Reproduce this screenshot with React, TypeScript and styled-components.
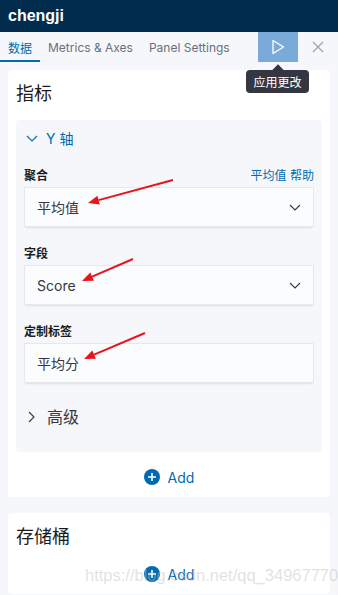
import React from 'react'
import styled, { createGlobalStyle } from 'styled-components'

const GlobalStyle = createGlobalStyle`
  html, body {
    margin: 0;
    padding: 0;
    background: #f5f7fa;
  }
  body {
    font-family: 'Inter', 'Noto Sans CJK SC', sans-serif;
    color: #343741;
  }
  * { box-sizing: border-box; }
`

const Page = styled.div`
  position: relative;
  width: 338px;
  height: 595px;
  overflow: hidden;
  background: #f5f7fa;
`

const Header = styled.header`
  height: 32px;
  padding: 0 8px;
  display: flex;
  align-items: center;
  background: #012c4d;
  color: #fff;
  font-size: 16px;
  font-weight: 700;
  font-family: 'Liberation Sans', 'Inter', sans-serif;
`

const TabBar = styled.nav`
  height: 30px;
  display: flex;
  align-items: stretch;
`

const Tab = styled.div<{ $active?: boolean }>`
  padding: 2px 8px 0 8px;
  display: flex;
  align-items: center;
  font-size: 12px;
  color: ${p => (p.$active ? '#006bb4' : '#69707d')};
  border-bottom: 2px solid ${p => (p.$active ? '#006bb4' : 'transparent')};
`

const Spacer = styled.div`
  flex: 1;
`

const PlayButton = styled.div`
  width: 40px;
  display: flex;
  align-items: center;
  justify-content: center;
  background: #79aad9;
`

const CloseButton = styled.div`
  width: 40px;
  display: flex;
  align-items: center;
  justify-content: center;
`

const Content = styled.div`
  padding: 8px 0 0 8px;
  width: 330px;
  display: flex;
  flex-direction: column;
  gap: 16px;
`

const Card = styled.section`
  background: #fff;
  border-radius: 4px;
  padding: 12px 8px 10px 8px;
`

const Title = styled.h2`
  margin: 0 0 14px 0;
  font-size: 18px;
  font-weight: 400;
  line-height: 24px;
  color: #1a1c21;
`

const Panel = styled.div`
  background: #f5f7fa;
  border-radius: 4px;
  padding: 8px 8px 23px 8px;
`

const PanelHead = styled.div`
  height: 20px;
  display: flex;
  align-items: center;
  gap: 8px;
  padding-left: 2px;
  color: #006bb4;
  font-size: 14px;
`

const Row = styled.div<{ $first?: boolean }>`
  margin-top: ${p => (p.$first ? '18px' : '17px')};
`

const LabelLine = styled.div`
  display: flex;
  justify-content: space-between;
  align-items: center;
  height: 16px;
  margin-bottom: 5px;
`

const Label = styled.label`
  font-size: 12px;
  font-weight: 700;
  color: #1a1c21;
`

const HelpLink = styled.span`
  font-size: 12px;
  color: #006bb4;
`

const Field = styled.div`
  height: 40px;
  display: flex;
  align-items: center;
  justify-content: space-between;
  padding: 0 12px;
  background: #fbfcfd;
  border: 1px solid rgba(0, 0, 0, 0.08);
  box-shadow: 0 1px 1px -1px rgba(152, 162, 179, 0.25), 0 3px 2px -2px rgba(152, 162, 179, 0.25);
  font-size: 14px;
  color: #343741;
`

const Advanced = styled.div`
  margin-top: 22px;
  display: flex;
  align-items: center;
  gap: 10px;
  padding-left: 1px;
  font-size: 16px;
  line-height: 24px;
  color: #343741;
`

const AddRow = styled.div`
  display: flex;
  align-items: center;
  justify-content: center;
  gap: 8px;
  height: 20px;
  margin-top: 15px;
  color: #006bb4;
  font-size: 14px;
`

const Tooltip = styled.div`
  position: absolute;
  left: 246px;
  top: 70px;
  width: 63px;
  height: 23px;
  border-radius: 4px;
  background: #343741;
  color: #fff;
  font-size: 12px;
  display: flex;
  align-items: center;
  justify-content: center;
  &::before {
    content: '';
    position: absolute;
    top: -4px;
    left: 28px;
    width: 8px;
    height: 8px;
    background: #343741;
    transform: rotate(45deg);
  }
`

const Overlay = styled.svg`
  position: absolute;
  left: 0;
  top: 0;
  pointer-events: none;
`

const Watermark = styled.div`
  position: absolute;
  left: 85px;
  top: 566px;
  font-family: 'Liberation Sans', sans-serif;
  font-size: 16.5px;
  color: rgba(190, 190, 190, 0.45);
  pointer-events: none;
  white-space: nowrap;
`

const Chevron = ({ dir, color = '#343741' }: { dir: 'down' | 'right'; color?: string }) => (
  <svg width="12" height="12" viewBox="0 0 12 12">
    {dir === 'down' ? (
      <path d="M1 4 L6 9 L11 4" fill="none" stroke={color} strokeWidth="1.1" />
    ) : (
      <path d="M4 1 L9 6 L4 11" fill="none" stroke={color} strokeWidth="1.1" />
    )}
  </svg>
)

const PlusCircle = () => (
  <svg width="16" height="16" viewBox="0 0 16 16">
    <circle cx="8" cy="8" r="8" fill="#006bb4" />
    <path d="M8 4 V12 M4 8 H12" stroke="#fff" strokeWidth="1.6" />
  </svg>
)

const Arrow = ({ x1, y1, x2, y2 }: { x1: number; y1: number; x2: number; y2: number }) => {
  const a = Math.atan2(y2 - y1, x2 - x1)
  const len = 11
  const w = 4.5
  const bx = x2 - len * Math.cos(a)
  const by = y2 - len * Math.sin(a)
  const p1 = `${bx + w * Math.sin(a)},${by - w * Math.cos(a)}`
  const p2 = `${bx - w * Math.sin(a)},${by + w * Math.cos(a)}`
  return (
    <g>
      <line x1={x1} y1={y1} x2={bx} y2={by} stroke="#e8141b" strokeWidth="2" />
      <polygon points={`${x2},${y2} ${p1} ${p2}`} fill="#e8141b" />
    </g>
  )
}

export default function App() {
  return (
    <Page>
      <GlobalStyle />
      <Header>chengji</Header>
      <TabBar>
        <Tab $active>数据</Tab>
        <Tab>Metrics &amp; Axes</Tab>
        <Tab>Panel Settings</Tab>
        <Spacer />
        <PlayButton>
          <svg width="14" height="16" viewBox="0 0 14 16">
            <path d="M2 1.5 L12.5 8 L2 14.5 Z" fill="none" stroke="#fff" strokeWidth="1.3" strokeLinejoin="round" />
          </svg>
        </PlayButton>
        <CloseButton>
          <svg width="12" height="12" viewBox="0 0 12 12">
            <path d="M1 1 L11 11 M11 1 L1 11" stroke="#98a2b3" strokeWidth="1.2" />
          </svg>
        </CloseButton>
      </TabBar>
      <Content>
        <Card>
          <Title>指标</Title>
          <Panel>
            <PanelHead>
              <Chevron dir="down" color="#006bb4" />
              <span>Y 轴</span>
            </PanelHead>
            <Row $first>
              <LabelLine>
                <Label>聚合</Label>
                <HelpLink>平均值 帮助</HelpLink>
              </LabelLine>
              <Field>
                <span>平均值</span>
                <Chevron dir="down" />
              </Field>
            </Row>
            <Row>
              <LabelLine>
                <Label>字段</Label>
              </LabelLine>
              <Field>
                <span>Score</span>
                <Chevron dir="down" />
              </Field>
            </Row>
            <Row>
              <LabelLine>
                <Label>定制标签</Label>
              </LabelLine>
              <Field>
                <span>平均分</span>
              </Field>
            </Row>
            <Advanced>
              <Chevron dir="right" />
              <span>高级</span>
            </Advanced>
          </Panel>
          <AddRow>
            <PlusCircle />
            <span>Add</span>
          </AddRow>
        </Card>
        <Card>
          <Title>存储桶</Title>
          <AddRow>
            <PlusCircle />
            <span>Add</span>
          </AddRow>
        </Card>
      </Content>
      <Tooltip>应用更改</Tooltip>
      <Overlay width="338" height="595">
        <Arrow x1={173} y1={180} x2={88} y2={203} />
        <Arrow x1={133} y1={259} x2={82} y2={281} />
        <Arrow x1={145} y1={333} x2={84} y2={359} />
      </Overlay>
      <Watermark>https://blog.csdn.net/qq_34967770</Watermark>
    </Page>
  )
}
